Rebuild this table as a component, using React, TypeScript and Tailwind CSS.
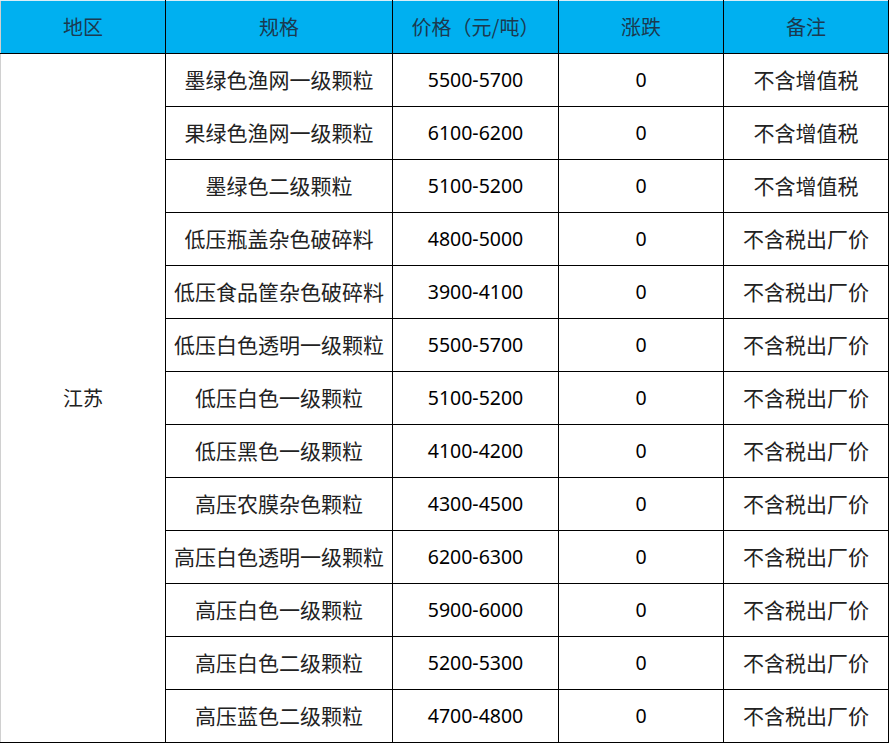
const rows: [string, string, string, string][] = [
  ["墨绿色渔网一级颗粒", "5500-5700", "0", "不含增值税"],
  ["果绿色渔网一级颗粒", "6100-6200", "0", "不含增值税"],
  ["墨绿色二级颗粒", "5100-5200", "0", "不含增值税"],
  ["低压瓶盖杂色破碎料", "4800-5000", "0", "不含税出厂价"],
  ["低压食品筐杂色破碎料", "3900-4100", "0", "不含税出厂价"],
  ["低压白色透明一级颗粒", "5500-5700", "0", "不含税出厂价"],
  ["低压白色一级颗粒", "5100-5200", "0", "不含税出厂价"],
  ["低压黑色一级颗粒", "4100-4200", "0", "不含税出厂价"],
  ["高压农膜杂色颗粒", "4300-4500", "0", "不含税出厂价"],
  ["高压白色透明一级颗粒", "6200-6300", "0", "不含税出厂价"],
  ["高压白色一级颗粒", "5900-6000", "0", "不含税出厂价"],
  ["高压白色二级颗粒", "5200-5300", "0", "不含税出厂价"],
  ["高压蓝色二级颗粒", "4700-4800", "0", "不含税出厂价"],
];

const cjk = "font-['Noto_Sans_CJK_SC',sans-serif]";
const num = "font-['Noto_Sans','Noto_Sans_CJK_SC',sans-serif]";

export default function App() {
  return (
    <div className="w-[889px] h-[743px] bg-white">
      <table className="w-[888px] table-fixed border-collapse text-center">
        <colgroup>
          <col className="w-[165px]" />
          <col className="w-[227px]" />
          <col className="w-[166px]" />
          <col className="w-[165px]" />
          <col className="w-[165px]" />
        </colgroup>
        <thead>
          <tr className="h-[53px] bg-[#00b0f0]">
            {["地区", "规格", "价格（元/吨）", "涨跌", "备注"].map((h, i) => (
              <th
                key={h}
                className={`border border-black border-t-[#d8eef8] p-0 text-[20px] font-normal text-[#1b3a50] ${cjk} ${i === 0 ? "border-l-[#d0d0d0]" : ""}`}
              >
                {h}
              </th>
            ))}
          </tr>
        </thead>
        <tbody>
          {rows.map((r, i) => (
            <tr key={i} className="h-[53px]">
              {i === 0 && (
                <td
                  rowSpan={rows.length}
                  className={`border border-black border-l-[#d0d0d0] p-0 text-[20px] text-[#222] ${cjk}`}
                >
                  江苏
                </td>
              )}
              <td className={`border border-black p-0 text-[21px] text-[#222] ${cjk}`}>{r[0]}</td>
              <td className={`border border-black p-0 text-[19.5px] text-black ${num}`}>{r[1]}</td>
              <td className={`border border-black p-0 text-[19.5px] text-black ${num}`}>{r[2]}</td>
              <td className={`border border-black p-0 text-[21px] text-[#222] ${cjk}`}>{r[3]}</td>
            </tr>
          ))}
        </tbody>
      </table>
    </div>
  );
}
